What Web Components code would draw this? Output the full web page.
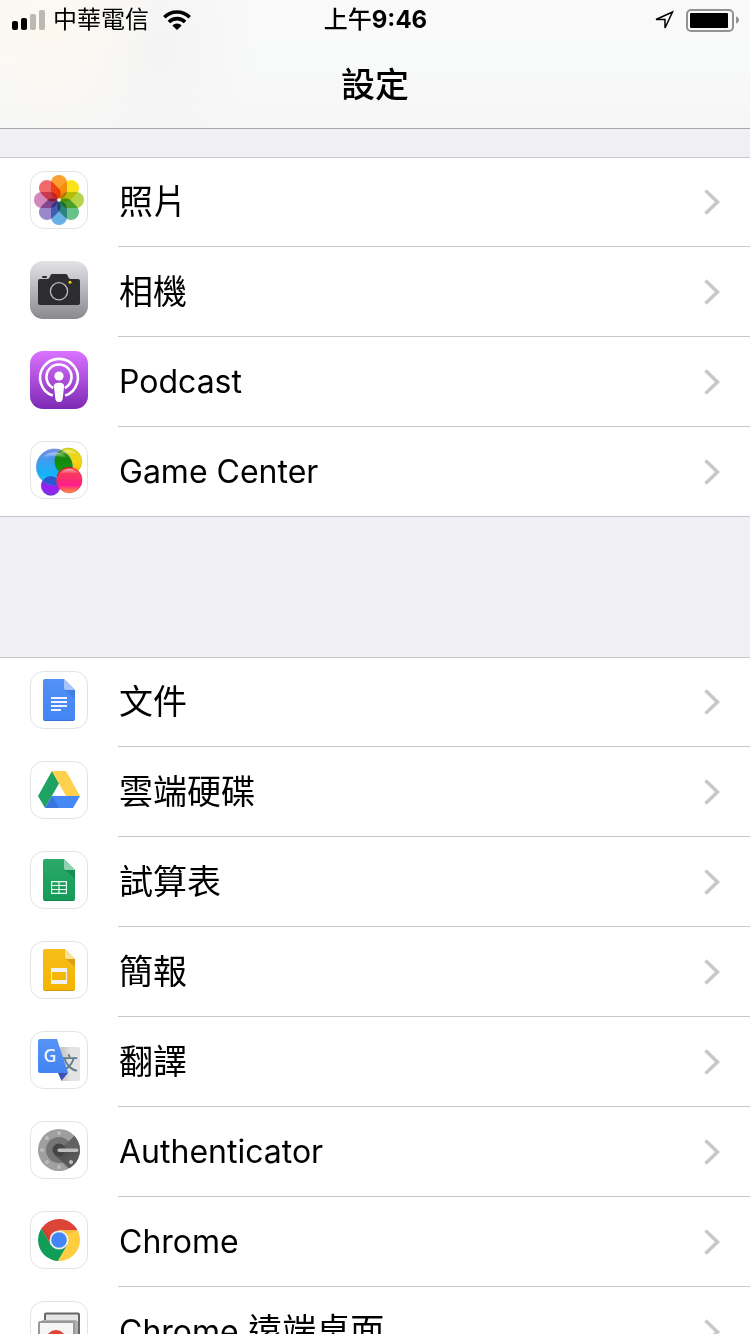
<!DOCTYPE html>
<html lang="zh-Hant">
<head>
<meta charset="utf-8">
<meta name="viewport" content="width=device-width, initial-scale=1">
<title>設定</title>
<style>
  body {
    margin: 0;
    font-family: Inter, "Noto Sans CJK TC", sans-serif;
    color: #000;
  }
</style>
</head>
<body>
<settings-page>
  <status-bar slot="status">
    <span slot="carrier">中華電信</span>
    <span slot="time">上午<b>9:46</b></span>
  </status-bar>
  <span slot="title">設定</span>

  <settings-group>
    <settings-row icon="photos">照片</settings-row>
    <settings-row icon="camera">相機</settings-row>
    <settings-row icon="podcast"><span lang="en">Podcast</span></settings-row>
    <settings-row icon="gamecenter"><span lang="en">Game Center</span></settings-row>
  </settings-group>

  <settings-group>
    <settings-row icon="docs">文件</settings-row>
    <settings-row icon="drive">雲端硬碟</settings-row>
    <settings-row icon="sheets">試算表</settings-row>
    <settings-row icon="slides">簡報</settings-row>
    <settings-row icon="translate">翻譯</settings-row>
    <settings-row icon="authenticator"><span lang="en">Authenticator</span></settings-row>
    <settings-row icon="chrome"><span lang="en">Chrome</span></settings-row>
    <settings-row icon="remote"><span lang="en">Chrome</span> 遠端桌面</settings-row>
  </settings-group>
</settings-page>

<script>
const petal = (color, angle) =>
  `<rect class="petal" x="21" y="4" width="16" height="24" rx="7.8" fill="${color}" transform="rotate(${angle} 29 29)"/>`;

const chromePart = (color, angle) =>
  `<path fill="${color}" transform="rotate(${angle} 29 29)" d="M29 19.5H47.7A21 21 0 0 0 11.42 17.56L20.77 33.75L29 29Z"/>`;

const rivet = (angle) =>
  `<circle cx="29" cy="12" r="2" fill="#bdbdbd" transform="rotate(${angle} 29 29)"/>`;

// every app icon is drawn on a 58 x 58 grid
const icons = {
  photos: `
    <g style="isolation:isolate">
      ${petal("#f9a030", 0)}${petal("#fbe31c", 45)}${petal("#b7d54a", 90)}${petal("#68c08b", 135)}
      ${petal("#69b1e4", 180)}${petal("#9b88c8", 225)}${petal("#d487b9", 270)}${petal("#f3696b", 315)}
    </g>
    <circle cx="29" cy="29" r="1.8" fill="#fff"/>`,

  camera: `
    <defs><linearGradient id="cam" x2="0" y2="1"><stop stop-color="#e3e3e7"/><stop offset="1" stop-color="#8a898e"/></linearGradient></defs>
    <rect width="58" height="58" rx="13" fill="url(#cam)"/>
    <rect x="12" y="15" width="5" height="2" rx="1" fill="#2d2d2f"/>
    <path fill="#2d2d2f" d="M10 18H17C19 18 19.500 17 20 15.500C20.500 13.500 21.500 13 23 13H35C36.500 13 37.500 13.500 38 15.500C38.500 17 39 18 41 18H48Q50 18 50 20V42Q50 44 48 44H10Q8 44 8 42V20Q8 18 10 18Z"/>
    <circle cx="29" cy="30.300" r="8.600" fill="#29292b" stroke="#bcbcbe" stroke-width="1.300"/>
    <circle cx="40" cy="21.300" r="1.500" fill="#fdc40b"/>`,

  podcast: `
    <defs><linearGradient id="pod" x2="0" y2="1"><stop stop-color="#da72ff"/><stop offset="1" stop-color="#7d29b5"/></linearGradient></defs>
    <rect width="58" height="58" rx="13" fill="url(#pod)"/>
    <g fill="none" stroke="#fff" stroke-width="2.600">
      <path d="M22.800 44.600A18.900 18.900 0 1 1 35.200 44.600"/>
      <path d="M23.200 37A12.500 12.500 0 1 1 34.800 37"/>
    </g>
    <circle cx="29" cy="25" r="4.600" fill="#fff"/>
    <path fill="#fff" d="M24 36C23.500 33 25.500 31.700 29 31.700S34.500 33 34 36L32.700 47.500C32.400 50 31.500 51 29 51S25.600 50 25.300 47.500Z"/>`,

  gamecenter: `
    <defs>
      <linearGradient id="gb" x2="0" y2="1"><stop stop-color="#7d8de6"/><stop offset=".3" stop-color="#3f9cec"/><stop offset=".7" stop-color="#13b2fc"/><stop offset="1" stop-color="#28d5ee"/></linearGradient>
      <linearGradient id="gy" x2="0" y2="1"><stop stop-color="#d9d91b"/><stop offset=".5" stop-color="#f5d412"/><stop offset="1" stop-color="#ffb400"/></linearGradient>
      <linearGradient id="gp" x2="0" y2="1"><stop stop-color="#f2504e"/><stop offset=".3" stop-color="#f8365f"/><stop offset=".7" stop-color="#ff1d8e"/><stop offset="1" stop-color="#ff9a30"/></linearGradient>
      <linearGradient id="gv" x2="0" y2="1"><stop stop-color="#5241d6"/><stop offset=".6" stop-color="#a21bf2"/><stop offset="1" stop-color="#7a37e4"/></linearGradient>
      <linearGradient id="gg" x2="0" y2="1"><stop stop-color="#6ba52d"/><stop offset=".4" stop-color="#15870c"/><stop offset="1" stop-color="#0ba316"/></linearGradient>
      <linearGradient id="shine" x2="0" y2="1"><stop stop-color="#fff" stop-opacity=".5"/><stop offset="1" stop-color="#fff" stop-opacity="0"/></linearGradient>
      <clipPath id="gc"><circle cx="24.400" cy="26" r="18.200"/></clipPath>
    </defs>
    <circle cx="38.300" cy="20.500" r="13.500" fill="url(#gy)" stroke="#c9b51b" stroke-width=".6"/>
    <circle cx="20.800" cy="44.800" r="9.500" fill="url(#gv)" stroke="#4a2bc4" stroke-width=".6"/>
    <circle cx="24.400" cy="26" r="18" fill="url(#gb)" stroke="#4f86dc" stroke-width=".6"/>
    <g clip-path="url(#gc)">
      <circle cx="38.300" cy="20.500" r="13.800" fill="url(#gg)"/>
      <circle cx="20.800" cy="44.800" r="9.700" fill="#2857cf"/>
    </g>
    <circle cx="39.300" cy="39" r="12.800" fill="url(#gp)" stroke="#e03648" stroke-width=".6"/>
    <path d="M27 35A13 13 0 0 1 42 26.500" fill="none" stroke="#a62625" stroke-width="1"/>
    <path d="M12 17A16.500 16.500 0 0 1 37 17Q24 13 12 17Z" fill="url(#shine)"/>
    <path d="M28.500 14A12 12 0 0 1 48 14Q38 11 28.500 14Z" fill="url(#shine)"/>
    <path d="M30 33A11 11 0 0 1 48.500 33Q39 30 30 33Z" fill="url(#shine)"/>`,

  docs: `
    <defs><linearGradient id="doc" x2="0" y2="1"><stop stop-color="#5391f5"/><stop offset="1" stop-color="#4285f4"/></linearGradient></defs>
    <path fill="url(#doc)" d="M15 8H34L45 19V48Q45 50 43 50H15Q13 50 13 48V10Q13 8 15 8Z"/>
    <path fill="#3a75d8" opacity=".6" d="M35 19H45V28Z"/>
    <path fill="#a7c5fa" d="M34 8L45 19H36Q34 19 34 17Z"/>
    <path fill="#f1f5fd" d="M21 26H37V28H21ZM21 30H37V32H21ZM21 34H37V36H21ZM21 38H31V40H21Z"/>
    <path stroke="#3767c4" d="M14 49.500H44" opacity=".6"/>`,

  drive: `
    <path fill="#1ea362" d="M22 10L29 22.500L15 47L8 35Z"/>
    <path fill="#4587f4" d="M22 35H50L43 47H15Z"/>
    <path fill="#3468cf" d="M22 35L29 47H15Z" opacity=".6"/>
    <path fill="#ffd04b" d="M22 10H36L50 35H36Z"/>`,

  sheets: `
    <defs><linearGradient id="sheet" x2="0" y2="1"><stop stop-color="#2aa969"/><stop offset="1" stop-color="#149c58"/></linearGradient></defs>
    <path fill="url(#sheet)" d="M15 8H34L45 19V48Q45 50 43 50H15Q13 50 13 48V10Q13 8 15 8Z"/>
    <path fill="#0c8045" opacity=".6" d="M35 19H45V28Z"/>
    <path fill="#8fd1b1" d="M34 8L45 19H36Q34 19 34 17Z"/>
    <path fill="none" stroke="#e9f6ef" stroke-width="1.200" d="M21.600 30.600H36.400V42.400H21.600ZM21.600 34.500H36.400M21.600 38.500H36.400M29 30.600V42.400"/>
    <path stroke="#0d7a44" d="M14 49.500H44" opacity=".6"/>`,

  slides: `
    <defs><linearGradient id="slide" x2="0" y2="1"><stop stop-color="#f6bd1b"/><stop offset="1" stop-color="#f4b400"/></linearGradient></defs>
    <path fill="url(#slide)" d="M15 8H35L45 18V48Q45 50 43 50H15Q13 50 13 48V10Q13 8 15 8Z"/>
    <path fill="#c88e12" opacity=".6" d="M36 18H45V26Z"/>
    <path fill="#fae09a" d="M35 8L45 18H37Q35 18 35 16Z"/>
    <path fill="#f1f1f1" fill-rule="evenodd" d="M21 27H37V43H21ZM22 31V39H36V31Z"/>
    <path stroke="#c28d0a" d="M14 49.500H44" opacity=".6"/>`,

  translate: `
    <defs>
      <linearGradient id="page"><stop offset=".3" stop-color="#c9c9c9"/><stop offset=".6" stop-color="#e3e3e3"/></linearGradient>
      <linearGradient id="tr" x2="0" y2="1"><stop stop-color="#5693f5"/><stop offset="1" stop-color="#4384f3"/></linearGradient>
    </defs>
    <path fill="url(#page)" d="M26 16H48Q50 16 50 18V48Q50 50 48 50H31Z"/>
    <text x="30" y="39" font-family="Noto Sans CJK TC" font-size="18" font-weight="500" fill="#607d8b">文</text>
    <path fill="#3c4fb9" d="M28 42H38L31.500 49.500Z"/>
    <path fill="url(#tr)" d="M10 8H27L38 42H10Q8 42 8 40V10Q8 8 10 8Z"/>
    <text x="13.500" y="31" font-family="Open Sans" font-size="18" font-weight="600" fill="#eef3fd">G</text>`,

  authenticator: `
    <defs>
      <linearGradient id="auth" x2="1" y2="1"><stop stop-color="#424242"/><stop offset="1" stop-color="#666"/></linearGradient>
      <clipPath id="dial"><circle cx="29" cy="29" r="21"/></clipPath>
    </defs>
    <circle cx="29" cy="29" r="21" fill="#9f9f9f"/>
    <circle cx="29" cy="29" r="13" fill="#757575"/>
    <g clip-path="url(#dial)">
      <path fill="#616161" d="M29 29L38.500 20.500L45 14L52 16V50H42L29 34Z"/>
      <path fill="url(#auth)" d="M24 33L38 47L44 50L50 29H29Z" opacity=".8"/>
    </g>
    <circle cx="29" cy="29" r="6.500" fill="#454545"/>
    ${rivet(0)}${rivet(-45)}${rivet(-90)}${rivet(-135)}${rivet(180)}${rivet(135)}
    <rect x="27.500" y="27.500" width="21" height="3.500" rx="1.700" fill="#bdbdbd"/>`,

  chrome: `
    ${chromePart("#db4437", 0)}${chromePart("#ffcd40", 120)}${chromePart("#0f9d58", 240)}
    <path fill="#a52714" opacity=".25" d="M11.420 17.560L20.770 33.750L20 26L14 18Z"/>
    <path fill="#ea9b00" opacity=".3" d="M29 19.500H47.700L37 23Z"/>
    <circle cx="29" cy="29" r="9.500" fill="#f1f1f1"/>
    <circle cx="29" cy="29" r="7.800" fill="#4285f4"/>`,

  remote: `
    <rect x="15" y="12.500" width="34" height="28" rx="1" fill="#e5e5e5" stroke="#666" stroke-width="2"/>
    <path fill="#b0b0b0" d="M12 19H45Q48 19 48 22V42H12Z"/>
    <rect x="9" y="21" width="35" height="29" rx="1" fill="#f5f5f5" stroke="#999" stroke-width="2"/>
    <circle cx="26" cy="39" r="10" fill="#db4437"/>`
};

class AppIcon extends HTMLElement {
  constructor() {
    super();
    this.attachShadow({ mode: "open" });
  }

  connectedCallback() {
    const name = this.getAttribute("name");
    const outlined = name !== "camera" && name !== "podcast";

    this.shadowRoot.innerHTML = `
      <style>
        :host {
          display: block;
          flex: none;
          width: 58px;
          height: 58px;
        }
        svg {
          display: block;
        }
        .petal {
          mix-blend-mode: multiply;
        }
      </style>
      <svg width="58" height="58" viewBox="0 0 58 58" aria-hidden="true">
        ${outlined ? '<rect x=".5" y=".5" width="57" height="57" rx="13" fill="#fff" stroke="#e3e3e3"/>' : ""}
        ${icons[name] || ""}
      </svg>
    `;
  }
}

class StatusBar extends HTMLElement {
  constructor() {
    super();

    const template = document.createElement("template");
    template.innerHTML = `
      <style>
        :host {
          display: grid;
          grid-template-columns: 1fr auto 1fr;
          align-items: center;
          height: 40px;
          padding: 0 11px 0 12px;
          font-size: 24px;
          line-height: 40px;
        }
        .side {
          display: flex;
          align-items: center;
          gap: 8px;
        }
        .right {
          justify-content: flex-end;
          gap: 12px;
        }
        svg {
          display: block;
          flex: none;
        }
        .wifi {
          margin-left: 6px;
        }
        ::slotted([slot="time"]) {
          font-weight: 500;
        }
      </style>
      <div class="side">
        <svg width="33" height="20" viewBox="0 0 33 20" aria-hidden="true">
          <rect y="11" width="6" height="9" rx="2"/>
          <rect x="9" y="8" width="6" height="12" rx="2"/>
          <rect x="18" y="4" width="6" height="16" rx="2" fill="#bcb9b3"/>
          <rect x="27" width="6" height="20" rx="2" fill="#bcb9b3"/>
        </svg>
        <slot name="carrier"></slot>
        <svg class="wifi" width="28" height="20" viewBox="0 0 28 20" aria-hidden="true">
          <g fill="none" stroke="#000" stroke-width="3.600">
            <path d="M1.300 7.200A18 18 0 0 1 26.700 7.200"/>
            <path d="M5.900 12A11.500 11.500 0 0 1 22.100 12"/>
          </g>
          <path d="M9.300 15.500A6.700 6.700 0 0 1 18.700 15.500L14 20Z"/>
        </svg>
      </div>
      <slot name="time"></slot>
      <div class="side right">
        <svg width="20" height="20" viewBox="0 0 20 20" aria-hidden="true">
          <path d="M18.500 2L2 9.500H11V18Z" fill="none" stroke="#000" stroke-width="1.500"/>
        </svg>
        <svg width="53" height="24" viewBox="0 0 53 24" aria-hidden="true">
          <rect x="1" y="2" width="46" height="21" rx="4" fill="none" stroke="#939393" stroke-width="2"/>
          <rect x="4" y="5" width="38" height="15" rx="1"/>
          <path d="M50 8.500Q53 9.500 53 12T50 15.500Z" fill="#939393"/>
        </svg>
      </div>
    `;

    this.attachShadow({ mode: "open" }).append(template.content.cloneNode(true));
  }
}

class SettingsRow extends HTMLElement {
  constructor() {
    super();
    this.attachShadow({ mode: "open" });
  }

  connectedCallback() {
    const icon = this.getAttribute("icon");

    this.shadowRoot.innerHTML = `
      <style>
        :host {
          display: block;
        }
        a {
          display: flex;
          gap: 30px;
          padding-left: 30px;
          color: inherit;
          text-decoration: none;
        }
        app-icon {
          margin-top: 14px;
        }
        .content {
          flex: 1;
          display: flex;
          align-items: center;
          justify-content: space-between;
          box-sizing: border-box;
          min-height: 90px;
          padding: 0 30px 0 1px;
          border-bottom: 1px solid #c8c7cc;
        }
        :host(:last-child) .content {
          border-color: transparent;
        }
        .label {
          font-size: 34px;
          line-height: 48px;
        }
        ::slotted([lang="en"]) {
          font-size: 32px;
        }
        svg {
          flex: none;
        }
      </style>
      <a href="#${icon}">
        <app-icon name="${icon}"></app-icon>
        <div class="content">
          <span class="label"><slot></slot></span>
          <svg width="16" height="26" viewBox="0 0 16 26" aria-hidden="true">
            <path d="M1.500 1.500L13.500 13L1.500 24.500" fill="none" stroke="#c7c7cc" stroke-width="3.600"/>
          </svg>
        </div>
      </a>
    `;
  }
}

class SettingsGroup extends HTMLElement {
  constructor() {
    super();

    const template = document.createElement("template");
    template.innerHTML = `
      <style>
        :host {
          display: block;
          background-color: #fff;
          box-shadow: inset 0 1px #c8c7cc, inset 0 -1px #c8c7cc;
        }
      </style>
      <slot></slot>
    `;

    this.attachShadow({ mode: "open" }).append(template.content.cloneNode(true));
  }
}

class SettingsPage extends HTMLElement {
  constructor() {
    super();

    const template = document.createElement("template");
    template.innerHTML = `
      <style>
        :host {
          display: flex;
          flex-direction: column;
          height: 100vh;
          background-color: #efeff4;
        }
        header {
          flex: none;
          border-bottom: 1px solid #a7a7aa;
          background:
            radial-gradient(circle at 50px 30px, #fdf8f0, transparent 110px),
            radial-gradient(circle at 160px 50px, #f3f3f3, transparent 100px),
            linear-gradient(#f9f9f9, #f8faf9 50%, #f6f6f6);
        }
        h1 {
          margin: 0;
          padding-top: 2px;
          font-size: 34px;
          font-weight: 500;
          line-height: 86px;
          text-align: center;
        }
        main {
          flex: 1;
          display: flex;
          flex-direction: column;
          gap: 140px;
          min-height: 0;
          padding-top: 28px;
          overflow-y: auto;
          scrollbar-width: none;
        }
        ::slotted(settings-group) {
          flex: none;
        }
      </style>
      <header>
        <slot name="status"></slot>
        <h1><slot name="title"></slot></h1>
      </header>
      <main><slot></slot></main>
    `;

    this.attachShadow({ mode: "open" }).append(template.content.cloneNode(true));
  }
}

customElements.define("app-icon", AppIcon);
customElements.define("status-bar", StatusBar);
customElements.define("settings-row", SettingsRow);
customElements.define("settings-group", SettingsGroup);
customElements.define("settings-page", SettingsPage);
</script>
</body>
</html>
